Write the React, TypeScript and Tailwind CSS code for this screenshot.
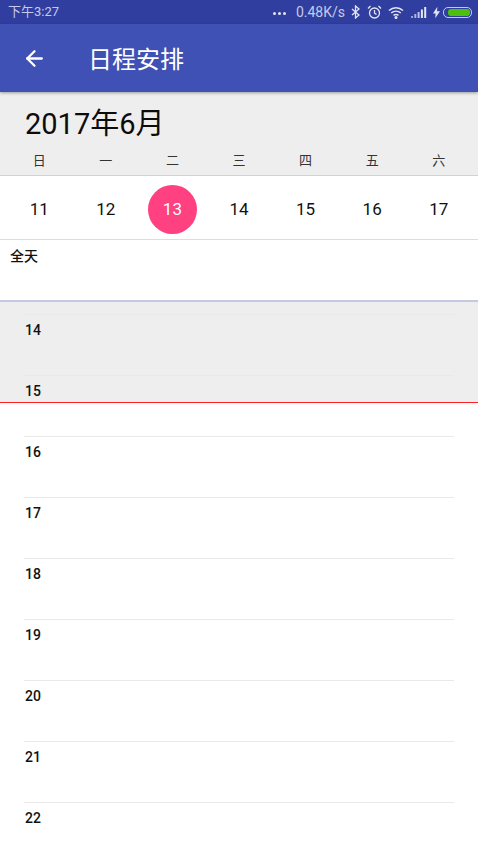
import { ArrowLeft } from 'lucide-react'

const weekDays = ['日', '一', '二', '三', '四', '五', '六']
const dates = [11, 12, 13, 14, 15, 16, 17]
const hours = [14, 15, 16, 17, 18, 19, 20, 21, 22]
const font = "font-['Roboto','Noto_Sans_CJK_SC',sans-serif]"

function StatusBar() {
  return (
    <div className="flex h-6 items-center justify-between bg-[#303f9f] pl-2 pr-[6px] text-[13px] text-[#c5cae9]">
      <span>下午3:27</span>
      <div className="flex items-center">
        <div className="mr-[10px] flex gap-[2px] pt-[3px]">
          <span className="h-[3px] w-[3px] rounded-full bg-[#e3e5f4]" />
          <span className="h-[3px] w-[3px] rounded-full bg-[#e3e5f4]" />
          <span className="h-[3px] w-[3px] rounded-full bg-[#e3e5f4]" />
        </div>
        <span className="mr-[6px] text-[14px]">0.48K/s</span>
        <svg width="9" height="14" viewBox="0 0 9 14" fill="none" stroke="#e3e5f4" strokeWidth="1.3" className="mr-[7px]">
          <path d="M1 4l7 6-3.5 3V1L8 4l-7 6" />
        </svg>
        <svg width="15" height="15" viewBox="0 0 15 15" fill="none" stroke="#e3e5f4" strokeWidth="1.3" className="mr-[6px]">
          <circle cx="7.5" cy="8" r="5" />
          <path d="M7.5 5v3.2l2 1.2M1 3.5L3.5 1M14 3.5L11.5 1" />
        </svg>
        <svg width="16" height="13" viewBox="0 0 16 13" fill="none" stroke="#e3e5f4" strokeWidth="1.5" className="mr-[7px]">
          <path d="M1 4.5c4-3.6 10-3.6 14 0M3.2 7c2.8-2.5 6.8-2.5 9.6 0M5.5 9.4c1.5-1.2 3.5-1.2 5 0" />
          <circle cx="8" cy="11.5" r="0.8" fill="#e3e5f4" />
        </svg>
        <svg width="16" height="11" viewBox="0 0 16 11" fill="#e3e5f4" className="mr-[6px]">
          <rect x="0" y="9" width="2" height="2" opacity="0.6" />
          <rect x="3.3" y="7" width="2" height="4" opacity="0.7" />
          <rect x="6.6" y="5" width="2" height="6" opacity="0.8" />
          <rect x="9.9" y="2.5" width="2" height="8.5" />
          <rect x="13.2" y="0" width="2" height="11" />
        </svg>
        <svg width="7" height="13" viewBox="0 0 8 13" fill="#e3e5f4" className="mr-[3px]">
          <path d="M5 0L0 7.5h3L2.5 13 8 5H4.6z" />
        </svg>
        <div className="flex h-[11px] w-[29px] items-center justify-end rounded-[5px] border border-[#c5cae9] p-[1px]">
          <div className="h-full w-[22px] rounded-[3px] bg-[#4cc00a]" />
        </div>
      </div>
    </div>
  )
}

function AppBar() {
  return (
    <div className="relative z-10 flex h-[68px] items-center bg-[#3f51b5] text-white shadow-[0_1px_3px_rgba(0,0,0,0.35)]">
      <ArrowLeft className="ml-[22px] h-[25px] w-[25px]" strokeWidth={2.2} />
      <span className="ml-[41px] pt-1 text-[24px] leading-none">日程安排</span>
    </div>
  )
}

function WeekHeader() {
  return (
    <div className="h-[84px] border-b border-[#d2d2d2] bg-[#eeeeee]">
      <div className="flex h-[61px] items-center pl-[25px] pt-1 text-[29px] leading-none text-[#0c0c0c]">2017年6月</div>
      <div className="grid grid-cols-7 px-[6px]">
        {weekDays.map((d) => (
          <div key={d} className="text-center text-[13px] leading-4 text-[#333333]">
            {d}
          </div>
        ))}
      </div>
    </div>
  )
}

function DateRow() {
  return (
    <div className="grid h-16 grid-cols-7 items-center border-b border-[#dddddd] bg-white px-[6px] pt-[3px]">
      {dates.map((d) => (
        <div key={d} className="flex justify-center">
          {d === 13 ? (
            <div className="flex h-[49px] w-[49px] items-center justify-center rounded-full bg-[#ff4081] pt-[2px] text-[17px] text-white">
              {d}
            </div>
          ) : (
            <span className="pt-[2px] text-[17px] text-[#111111]">{d}</span>
          )}
        </div>
      ))}
    </div>
  )
}

export default function App() {
  return (
    <div className={`${font} h-[850px] w-[478px] overflow-hidden bg-white`}>
      <StatusBar />
      <AppBar />
      <WeekHeader />
      <DateRow />
      <div className="h-[62px] border-b-2 border-[#c5c8e0] pl-[10px] pt-[6px] text-[14px] font-medium leading-5 text-[#111111]">全天</div>
      <div className="relative">
        {/* past time shading and the current time line */}
        <div className="absolute left-0 top-0 h-[100px] w-full bg-[#eeeeee]" />
        <div className="relative pt-3">
          {hours.map((h) => (
            <div key={h} className="mx-6 h-[61px] border-t border-[#e9e9e9] pl-px pt-[5px] text-[14px] font-medium leading-5 text-[#111111]">
              {h}
            </div>
          ))}
        </div>
        <div className="absolute left-0 top-[100px] h-px w-full bg-[#ff2222]" />
      </div>
    </div>
  )
}
